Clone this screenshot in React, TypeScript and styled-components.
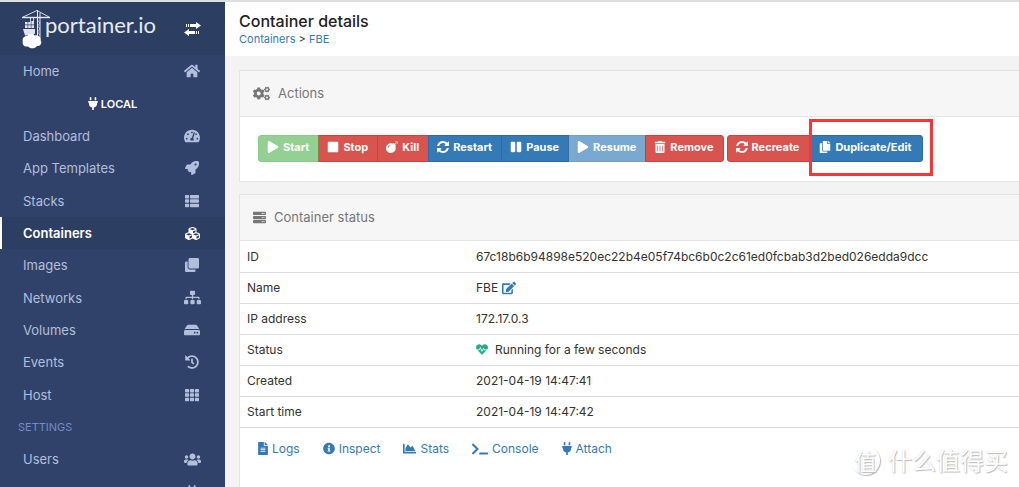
import React from 'react';
import styled, { createGlobalStyle, css } from 'styled-components';
import type { IconType } from 'react-icons';
import {
  FaBomb,
  FaChartArea,
  FaClone,
  FaCogs,
  FaCopy,
  FaCubes,
  FaEdit,
  FaFileAlt,
  FaHdd,
  FaHeartbeat,
  FaHistory,
  FaHome,
  FaInfoCircle,
  FaPause,
  FaPlay,
  FaPlug,
  FaRocket,
  FaServer,
  FaSitemap,
  FaStop,
  FaTachometerAlt,
  FaTerminal,
  FaTh,
  FaThList,
  FaTrashAlt,
  FaUsers,
} from 'react-icons/fa';

const GlobalStyle = createGlobalStyle`
  * { box-sizing: border-box; }
  html, body, #root { height: 100%; }
  body {
    margin: 0;
    overflow: hidden;
    background: #f3f3f3;
    color: #333;
    font-family: Inter, "Noto Sans CJK SC", sans-serif;
    font-size: 12px;
  }
  a { color: #337ab7; text-decoration: none; }
`;

const Glyph = styled.span<{ $width: number }>`
  display: flex;
  flex: none;
  svg {
    width: ${(p) => p.$width}px;
    height: ${(p) => Math.max(p.$width, 13)}px;
  }
`;

const Page = styled.div`
  position: relative;
  display: grid;
  grid-template-columns: 225px minmax(0, 1fr);
  height: 100vh;
  overflow: hidden;
  border-top: 2px solid #dedede;
`;

const Sidebar = styled.nav`
  background: #30426a;
  overflow: hidden;
`;

const SidebarHeader = styled.div`
  display: flex;
  align-items: center;
  justify-content: space-between;
  height: 53px;
  padding: 0 24px 0 22px;
  background: #2d3e63;
  color: #fff;
`;

const Logo = styled.a`
  display: flex;
  align-items: flex-start;
  color: #e6eaf2;
`;

const Wordmark = styled.span`
  margin-left: -5px;
  font: 22px/32px Lato, sans-serif;
`;

const ToggleButton = styled.button`
  display: flex;
  padding: 0;
  border: 0;
  background: none;
  color: #fff;
`;

const Menu = styled.ul`
  margin: 0;
  padding: 0;
  list-style: none;
`;

const MenuItem = styled.li<{ $active?: boolean }>`
  height: 32px;
  border-left: 2px solid transparent;
  color: #b2bfdc;
  font-size: 13px;
  &:nth-child(3n + 2) { height: 33px; }
  ${(p) =>
    p.$active &&
    css`
      border-left-color: #fff;
      background: #2d3e63;
      color: #fff;
      font-weight: 600;
    `}
`;

const MenuLink = styled.a`
  display: flex;
  align-items: center;
  justify-content: space-between;
  height: 100%;
  padding: 0 24px 0 21px;
  color: inherit;
`;

const IconSlot = styled.span`
  display: flex;
  justify-content: center;
  width: 18px;
  margin-left: auto;
`;

const EndpointName = styled.div`
  display: flex;
  align-items: center;
  justify-content: center;
  gap: 3px;
  height: 100%;
  padding-right: 2px;
  color: #fff;
  font-size: 11px;
  font-weight: 600;
`;

const SectionLabel = styled.div`
  display: flex;
  align-items: center;
  height: 100%;
  padding-left: 16px;
  color: #738bc9;
  font-size: 11px;
`;

const Content = styled.main`
  display: flex;
  flex-direction: column;
  min-width: 0;
`;

const PageHeader = styled.header`
  height: 54px;
  padding: 9px 14px 0;
  background: #fff;
`;

const Title = styled.h1`
  margin: 0;
  font-size: 16px;
  font-weight: 500;
  line-height: 20px;
  color: #222;
`;

const Breadcrumb = styled.div`
  font-size: 11px;
  line-height: 17px;
`;

const Cards = styled.div`
  display: flex;
  flex-direction: column;
  flex: 1;
  gap: 12px;
  padding: 14px 0 0 14px;
`;

const Card = styled.section<{ $grow?: boolean }>`
  flex: ${(p) => (p.$grow ? '1' : 'none')};
  border: 1px solid #e4e4e4;
  border-right: 0;
  border-bottom-width: ${(p) => (p.$grow ? '0' : '1px')};
  background: #fff;
`;

const CardHeader = styled.h2`
  display: flex;
  align-items: center;
  gap: 8px;
  height: 46px;
  margin: 0;
  padding: 0 13px 1px;
  border-bottom: 1px solid #e4e4e4;
  background: #f6f6f6;
  color: #767676;
  font-size: 13px;
  font-weight: 400;
`;

const Actions = styled.div`
  display: flex;
  gap: 3px;
  padding: 18px 18px 19px;
`;

const tones = {
  success: ['#5cb85c', '#4cae4c'],
  danger: ['#d9534f', '#d43f3a'],
  primary: ['#337ab7', '#2e6da4'],
};

const ActionButton = styled.button<{ $tone: keyof typeof tones }>`
  display: flex;
  align-items: center;
  gap: 4px;
  height: 27px;
  padding: 0 9px 3px 8px;
  border: 1px solid ${(p) => tones[p.$tone][1]};
  background: ${(p) => tones[p.$tone][0]};
  color: #fff;
  font: 700 11px Inter, sans-serif;
  white-space: nowrap;
  svg { flex: none; width: 12px; height: 12px; }
  & + & { margin-left: -1px; }
  &:first-child { border-radius: 3px 0 0 3px; }
  &:last-child { border-radius: 0 3px 3px 0; }
  &:disabled { opacity: 0.65; }
`;

const ButtonGroup = styled.div<{ $wide?: boolean }>`
  display: flex;
  ${(p) =>
    p.$wide &&
    css`
      ${ActionButton} { padding: 0 11px 3px 8px; }
    `}
`;

const Highlighted = styled.div`
  position: relative;
  display: flex;
  margin-left: -1px;
  &::after {
    content: '';
    position: absolute;
    inset: -16px -10px -14px -1px;
    border: 3px solid #fb3535;
    pointer-events: none;
  }
`;

const Details = styled.table`
  width: 100%;
  border-collapse: collapse;
  table-layout: fixed;
`;

const HeadCell = styled.th`
  width: 229px;
  height: 31px;
  padding: 0 7px;
  border-bottom: 1px solid #dcdcdc;
  font-weight: 400;
  text-align: left;
`;

const Cell = styled.td`
  padding: 0 7px;
  border-bottom: 1px solid #dcdcdc;
`;

const Value = styled.span<{ $gap: number }>`
  display: flex;
  align-items: center;
  gap: ${(p) => p.$gap}px;
`;

const EditButton = styled.button`
  display: flex;
  padding: 0;
  border: 0;
  background: none;
  color: #337ab7;
`;

const Links = styled.div`
  display: flex;
  gap: 23px;
  padding: 13px 18px;
`;

const DetailLink = styled.a`
  display: flex;
  align-items: center;
  gap: 4px;
  font-size: 12px;
  line-height: 16px;
`;

const Watermark = styled.div`
  position: absolute;
  right: 11px;
  bottom: 9px;
  display: flex;
  align-items: center;
  gap: 8px;
  color: #fff;
  font: 24px/36px "Noto Sans CJK SC", sans-serif;
  text-shadow: 1px 1px 1px #bbb, 0 0 1px #ccc;
`;

const Seal = styled.span`
  display: flex;
  flex: none;
  align-items: center;
  justify-content: center;
  width: 29px;
  height: 29px;
  border-radius: 50%;
  box-shadow: 1px 1px 1px #bbb;
  font-size: 22px;
`;

const Crane = () => (
  <svg width="28" height="40" viewBox="0 0 28 40" aria-hidden="true">
    <g fill="none" stroke="#e6eaf2">
      <path d="M0 8.500H28" strokeWidth="1.4" />
      <path d="M1 8L15 1.500L27 8" strokeWidth="0.9" />
      <path d="M15.500 1V29M18 4V31" strokeWidth="1" />
      <path d="M15.500 11l2.500 3-2.500 3 2.500 3-2.500 3 2.500 3" strokeWidth="0.7" />
      <path d="M8.500 9v5M11.500 9v5" strokeWidth="0.8" />
    </g>
    <path d="M3 13h2.600v2.600H3zM6.200 13h2.600v2.600H6.200zM9.400 12h2.600v3.600H9.400zM3 16.300h2.600v2.600H3zM6.200 16.300h2.600v2.600H6.200zM9.400 16.300h2.600v2.600H9.400zM1 20h12v4.500l-3 2H3z" fill="#dfe4ee" />
    <path
      d="M6 37.500C2 38 0 35.500 .8 32.500C0 29 2.500 26.500 5.500 27C7 24.500 11 24.500 12.500 26.500C16 25.500 19 28 18.500 31C20.500 34 18.500 37.500 15 37C13 40 8 40 6 37.500Z"
      fill="#fff"
    />
  </svg>
);

const Transfer = () => (
  <svg width="17" height="14" viewBox="0 0 17 14" fill="currentColor" aria-hidden="true">
    <path d="M12 0l5 3.500L12 7V5H6V2h6zM4 2h1v3H4zM2 2h1v3H2z" />
    <path d="M5 7L0 10.500L5 14v-2h6V9H5zM12 9h1v3h-1zM14 9h1v3h-1z" />
  </svg>
);

const Refresh = () => (
  <svg width="12" height="12" viewBox="0 0 1536 1536" fill="currentColor" aria-hidden="true">
    <path d="M1511 928q0 5-1 7-64 268-268 434.500T764 1536q-146 0-282.500-55T238 1324l-129 129q-19 19-45 19t-45-19-19-45V960q0-26 19-45t45-19h448q26 0 45 19t19 45-19 45l-137 137q71 66 161 102t187 36q134 0 250-65t186-179q11-17 53-117 8-23 30-23h192q13 0 22.500 9.500t9.500 22.500zm25-800v448q0 26-19 45t-45 19h-448q-26 0-45-19t-19-45 19-45l138-138Q969 256 768 256q-134 0-250 65T332 500q-11 17-53 117-8 23-30 23H50q-13 0-22.500-9.500T18 608v-7q65-268 270-434.500T768 0q146 0 284 55.500T1297 212l130-129q19-19 45-19t45 19 19 45z" />
  </svg>
);

type MenuEntry = {
  label: string;
  icon?: IconType;
  width?: number;
  kind?: 'endpoint' | 'section' | 'iconOnly';
};

const menu: MenuEntry[] = [
  { label: 'Home', icon: FaHome, width: 16 },
  { label: 'LOCAL', kind: 'endpoint' },
  { label: 'Dashboard', icon: FaTachometerAlt, width: 16 },
  { label: 'App Templates', icon: FaRocket, width: 14 },
  { label: 'Stacks', icon: FaThList, width: 14 },
  { label: 'Containers', icon: FaCubes, width: 15 },
  { label: 'Images', icon: FaClone, width: 14 },
  { label: 'Networks', icon: FaSitemap, width: 17 },
  { label: 'Volumes', icon: FaHdd, width: 16 },
  { label: 'Events', icon: FaHistory, width: 14 },
  { label: 'Host', icon: FaTh, width: 14 },
  { label: 'SETTINGS', kind: 'section' },
  { label: 'Users', icon: FaUsers, width: 17 },
  { label: 'Endpoints', icon: FaPlug, width: 14, kind: 'iconOnly' },
];

const rows: [string, React.ReactNode][] = [
  ['ID', '67c18b6b94898e520ec22b4e05f74bc6b0c2c61ed0fcbab3d2bed026edda9dcc'],
  [
    'Name',
    <Value $gap={4}>
      FBE
      <EditButton aria-label="Edit name">
        <Glyph $width={14}>
          <FaEdit />
        </Glyph>
      </EditButton>
    </Value>,
  ],
  ['IP address', '172.17.0.3'],
  [
    'Status',
    <Value $gap={7}>
      <Glyph $width={12}>
        <FaHeartbeat color="#23ae89" />
      </Glyph>
      Running for a few seconds
    </Value>,
  ],
  ['Created', '2021-04-19 14:47:41'],
  ['Start time', '2021-04-19 14:47:42'],
];

const links: [string, IconType, number][] = [
  ['Logs', FaFileAlt, 10],
  ['Inspect', FaInfoCircle, 12],
  ['Stats', FaChartArea, 13],
  ['Console', FaTerminal, 16],
  ['Attach', FaPlug, 10],
];

export default function App() {
  return (
    <>
      <GlobalStyle />
      <Page>
        <Sidebar>
          <SidebarHeader>
            <Logo href="#home">
              <Crane />
              <Wordmark>portainer.io</Wordmark>
            </Logo>
            <ToggleButton aria-label="Toggle sidebar">
              <Transfer />
            </ToggleButton>
          </SidebarHeader>
          <Menu>
            {menu.map(({ label, icon: Icon, width = 14, kind }) => (
              <MenuItem key={label} $active={label === 'Containers'}>
                {kind === 'endpoint' && (
                  <EndpointName>
                    <Glyph $width={10}>
                      <FaPlug />
                    </Glyph>
                    {label}
                  </EndpointName>
                )}
                {kind === 'section' && <SectionLabel>{label}</SectionLabel>}
                {Icon && (
                  <MenuLink href="#menu" aria-label={label}>
                    {kind !== 'iconOnly' && label}
                    <IconSlot>
                      <Glyph $width={width}>
                        <Icon />
                      </Glyph>
                    </IconSlot>
                  </MenuLink>
                )}
              </MenuItem>
            ))}
          </Menu>
        </Sidebar>
        <Content>
          <PageHeader>
            <Title>Container details</Title>
            <Breadcrumb>
              <a href="#containers">Containers</a> &gt; <a href="#fbe">FBE</a>
            </Breadcrumb>
          </PageHeader>
          <Cards>
            <Card>
              <CardHeader>
                <Glyph $width={17}>
                  <FaCogs />
                </Glyph>
                Actions
              </CardHeader>
              <Actions>
                <ButtonGroup>
                  <ActionButton $tone="success" disabled><FaPlay />Start</ActionButton>
                  <ActionButton $tone="danger"><FaStop />Stop</ActionButton>
                  <ActionButton $tone="danger"><FaBomb />Kill</ActionButton>
                  <ActionButton $tone="primary"><Refresh />Restart</ActionButton>
                  <ActionButton $tone="primary"><FaPause />Pause</ActionButton>
                  <ActionButton $tone="primary" disabled><FaPlay />Resume</ActionButton>
                  <ActionButton $tone="danger"><FaTrashAlt />Remove</ActionButton>
                </ButtonGroup>
                <ButtonGroup $wide>
                  <ActionButton $tone="danger"><Refresh />Recreate</ActionButton>
                  <Highlighted>
                    <ActionButton $tone="primary"><FaCopy />Duplicate/Edit</ActionButton>
                  </Highlighted>
                </ButtonGroup>
              </Actions>
            </Card>
            <Card $grow>
              <CardHeader>
                <Glyph $width={13}>
                  <FaServer />
                </Glyph>
                Container status
              </CardHeader>
              <Details>
                <tbody>
                  {rows.map(([label, value]) => (
                    <tr key={label}>
                      <HeadCell scope="row">{label}</HeadCell>
                      <Cell>{value}</Cell>
                    </tr>
                  ))}
                </tbody>
              </Details>
              <Links>
                {links.map(([label, Icon, width]) => (
                  <DetailLink key={label} href="#detail">
                    <Glyph $width={width}>
                      <Icon />
                    </Glyph>
                    {label}
                  </DetailLink>
                ))}
              </Links>
            </Card>
          </Cards>
        </Content>
        <Watermark>
          <Seal>值</Seal>
          什么值得买
        </Watermark>
      </Page>
    </>
  );
}
